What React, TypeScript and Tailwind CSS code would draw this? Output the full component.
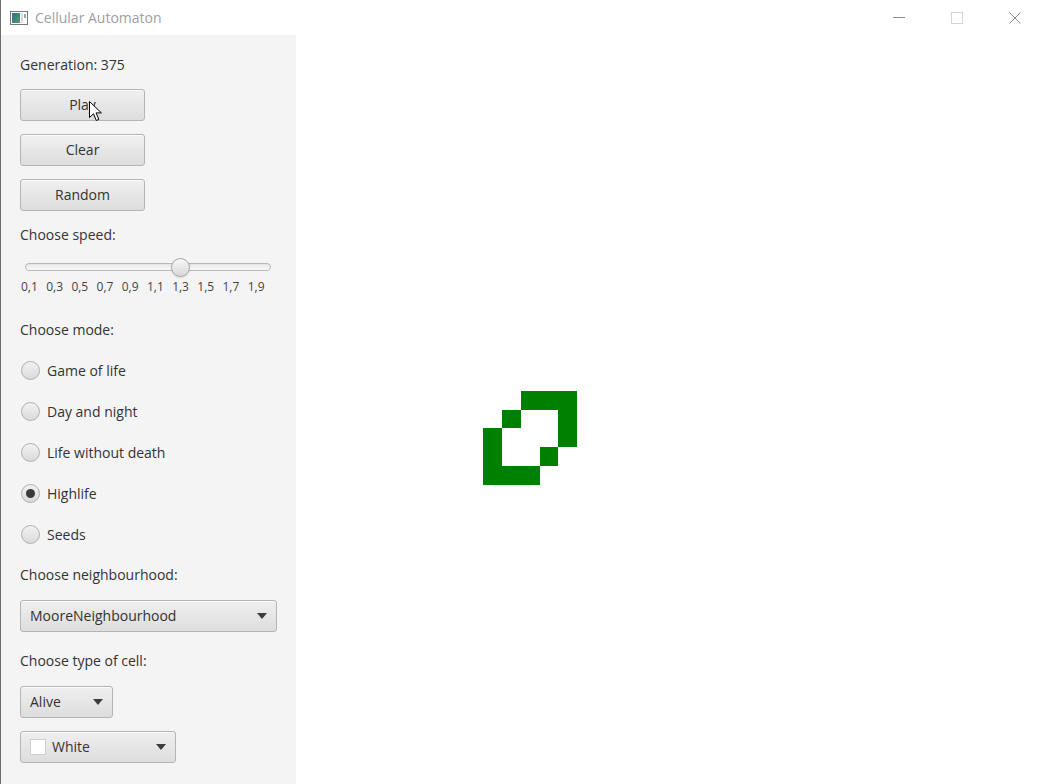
import React from "react";

const font = { fontFamily: '"Open Sans", "Noto Sans", sans-serif' };

// cell edges on the canvas (px), as drawn by the grid
const xs = [187, 206, 225, 244, 262, 281];
const ys = [356, 375, 393, 412, 431, 450];

const cells: [number, number][] = [
  [2, 0], [3, 0], [4, 0],
  [1, 1], [4, 1],
  [0, 2], [4, 2],
  [0, 3], [3, 3],
  [0, 4], [1, 4], [2, 4],
];

function Button({ label }: { label: string }) {
  return (
    <button className="flex h-[32px] w-[125px] items-center justify-center rounded-[3px] border border-[#b4b4b4] bg-gradient-to-b from-[#f0f0f0] to-[#dddddd] pb-[2px] text-[14px] text-[#333333] shadow-[inset_0_1px_0_#fafafa]">
      {label}
    </button>
  );
}

function Arrow() {
  return (
    <svg width="10" height="6" viewBox="0 0 10 6" className="shrink-0">
      <path d="M0 0 H10 L5 6 Z" fill="#3c3c3c" />
    </svg>
  );
}

function Combo({
  label,
  width,
  swatch,
}: {
  label: string;
  width: string;
  swatch?: boolean;
}) {
  return (
    <div
      className={`flex h-[32px] ${width} items-center justify-between rounded-[3px] border border-[#b4b4b4] bg-gradient-to-b from-[#efefef] to-[#dddddd] pl-[9px] pr-[9px] text-[14px] text-[#333333] shadow-[inset_0_1px_0_#fafafa]`}
    >
      <div className="flex items-center gap-[6px] pb-[2px]">
        {swatch && (
          <span className="mt-[2px] block h-[16px] w-[16px] border border-[#cfcfcf] bg-white" />
        )}
        <span>{label}</span>
      </div>
      <Arrow />
    </div>
  );
}

function Radio({ label, checked }: { label: string; checked?: boolean }) {
  return (
    <div className="flex h-[20px] items-center gap-[7px]">
      <span className="ml-[1px] flex h-[19px] w-[19px] items-center justify-center rounded-full border border-[#b0b0b0] bg-gradient-to-b from-[#f2f2f2] to-[#dadada]">
        {checked && <span className="block h-[9px] w-[9px] rounded-full bg-[#3a3a3a]" />}
      </span>
      <span className="text-[14px] text-[#333333]">{label}</span>
    </div>
  );
}

export default function App() {
  const ticks = ["0,1", "0,3", "0,5", "0,7", "0,9", "1,1", "1,3", "1,5", "1,7", "1,9"];
  return (
    <div className="relative flex h-[784px] w-[1046px] flex-col overflow-hidden bg-white" style={font}>
      {/* title bar */}
      <div className="flex h-[35px] shrink-0 items-center border-l border-[#6e6e6e] bg-white">
        <svg width="18" height="14" viewBox="0 0 18 14" className="ml-[9px]">
          <rect x="0.5" y="0.5" width="17" height="13" fill="#ffffff" stroke="#7a7a7a" />
          <defs>
            <linearGradient id="g" x1="0" y1="0" x2="1" y2="1">
              <stop offset="0" stopColor="#2f6f8f" />
              <stop offset="1" stopColor="#4aa06a" />
            </linearGradient>
          </defs>
          <rect x="2" y="2" width="8" height="10" fill="url(#g)" />
          <rect x="11" y="2" width="2" height="10" fill="#cfe0d8" />
          <rect x="14" y="3" width="2" height="4" fill="#9aa9a3" />
        </svg>
        <span className="ml-[7px] text-[14px] text-[#a0a0a0]">Cellular Automaton</span>
        <div className="ml-auto flex h-full items-center">
          <div className="flex h-full w-[58px] items-center justify-center">
            <span className="block h-px w-[12px] bg-[#8a8a8a]" />
          </div>
          <div className="flex h-full w-[58px] items-center justify-center">
            <span className="block h-[12px] w-[12px] border border-[#d4d4d4]" />
          </div>
          <div className="mr-[2px] flex h-full w-[58px] items-center justify-center">
            <svg width="12" height="12" viewBox="0 0 12 12">
              <path d="M0.5 0.5 L11.5 11.5 M11.5 0.5 L0.5 11.5" stroke="#8a8a8a" strokeWidth="1" />
            </svg>
          </div>
        </div>
      </div>

      <div className="flex flex-1 border-l border-[#6e6e6e]">
        {/* control panel */}
        <div className="flex w-[295px] shrink-0 flex-col bg-[#f4f4f4] pl-[19px] pt-[20px] text-[14px] text-[#333333]">
          <div className="h-[20px] leading-[20px]">Generation: 375</div>
          <div className="mt-[14px] flex flex-col gap-[13px]">
            <Button label="Play" />
            <Button label="Clear" />
            <Button label="Random" />
          </div>
          <div className="mt-[14px] h-[20px] leading-[20px]">Choose speed:</div>
          <div className="relative mt-[12px] flex h-[20px] w-[252px] items-center">
            <div className="ml-[5px] h-[8px] w-[246px] rounded-full border border-[#b8b8b8] bg-gradient-to-b from-[#e6e6e6] to-[#fafafa]" />
            <span className="absolute left-[151px] top-[0.5px] block h-[19px] w-[19px] rounded-full border border-[#a8a8a8] bg-gradient-to-b from-[#f8f8f8] to-[#d8d8d8] shadow-[0_1px_2px_rgba(0,0,0,0.12)]" />
          </div>
          <div className="mt-[2px] flex h-[16px] text-[12px] leading-[16px] text-[#444444]">
            {ticks.map((t) => (
              <span key={t} className="w-[25.2px] shrink-0 pl-[1px]">
                {t}
              </span>
            ))}
          </div>
          <div className="mt-[25px] h-[20px] leading-[20px]">Choose mode:</div>
          <div className="mt-[20px] flex flex-col gap-[21px]">
            <Radio label="Game of life" />
            <Radio label="Day and night" />
            <Radio label="Life without death" />
            <Radio label="Highlife" checked />
            <Radio label="Seeds" />
          </div>
          <div className="mt-[21px] h-[20px] leading-[20px]">Choose neighbourhood:</div>
          <div className="mt-[15px]">
            <Combo label="MooreNeighbourhood" width="w-[257px]" />
          </div>
          <div className="mt-[19px] h-[20px] leading-[20px]">Choose type of cell:</div>
          <div className="mt-[15px] flex flex-col gap-[13px]">
            <Combo label="Alive" width="w-[93px]" />
            <Combo label="White" width="w-[156px]" swatch />
          </div>
        </div>

        {/* canvas */}
        <div className="flex-1 bg-white">
          <svg width="750" height="749" viewBox="0 0 750 749" shapeRendering="crispEdges">
            {cells.map(([cx, cy]) => (
              <rect
                key={`${cx}-${cy}`}
                x={xs[cx]}
                y={ys[cy]}
                width={xs[cx + 1] - xs[cx]}
                height={ys[cy + 1] - ys[cy]}
                fill="#008000"
              />
            ))}
          </svg>
        </div>
      </div>

      {/* mouse cursor */}
      <svg
        width="14"
        height="21"
        viewBox="0 0 14 21"
        className="pointer-events-none absolute left-[89px] top-[101px]"
      >
        <path
          d="M0.5 0.5 V16.5 L4.5 12.8 L7.3 19.5 L9.8 18.4 L7.1 11.9 L12.4 11.9 Z"
          fill="#ffffff"
          stroke="#000000"
          strokeWidth="1"
          strokeLinejoin="round"
        />
      </svg>
    </div>
  );
}
